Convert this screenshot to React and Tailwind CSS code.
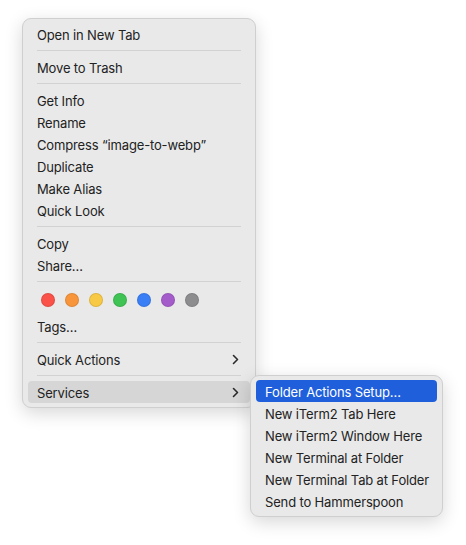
import React from "react";

// Finder-style context menu with the Services submenu open.
const TAGS = ["#fa5149", "#f8953a", "#f8c945", "#3fc352", "#3a7ef6", "#a55ccb", "#8d8d90"];

const SERVICES = [
  "Folder Actions Setup…",
  "New iTerm2 Tab Here",
  "New iTerm2 Window Here",
  "New Terminal at Folder",
  "New Terminal Tab at Folder",
  "Send to Hammerspoon",
];

function Chevron() {
  return (
    <svg width="7" height="11" viewBox="0 0 7 11" className="block">
      <polyline points="1.5,1.5 5.5,5.5 1.5,9.5" fill="none" stroke="#2a2a2a" strokeWidth="1.6" strokeLinecap="round" strokeLinejoin="round" />
    </svg>
  );
}

function Item({ label, sub, active }) {
  return (
    <div className={`flex h-[22px] items-center justify-between rounded-[4px] pl-[9px] pr-[11px] ${active ? "bg-[#d6d6d6]" : ""}`}>
      <span className="pt-[2px]">{label}</span>
      {sub && <Chevron />}
    </div>
  );
}

function Sep() {
  return (
    <div className="py-[5px] px-[9px]">
      <div className="h-px bg-[#d2d2d2]" />
    </div>
  );
}

export default function App() {
  return (
    <div className="relative h-[545px] w-[466px] bg-white text-[13px] leading-none tracking-[-0.15px] text-[#222]" style={{ fontFamily: "Inter, 'Noto Sans', sans-serif" }}>
      <div className="absolute left-[22px] top-[18px] w-[234px] rounded-[9px] border border-[#cfcfcf] bg-[#e9e9e9] px-[5px] py-[4px] shadow-[0_5px_18px_rgba(0,0,0,0.16)]">
        <Item label="Open in New Tab" />
        <Sep />
        <Item label="Move to Trash" />
        <Sep />
        <Item label="Get Info" />
        <Item label="Rename" />
        <Item label="Compress “image-to-webp”" />
        <Item label="Duplicate" />
        <Item label="Make Alias" />
        <Item label="Quick Look" />
        <Sep />
        <Item label="Copy" />
        <Item label="Share…" />
        <Sep />
        <div className="flex h-[28px] items-start gap-[10px] pl-[13px] pt-[6px]">
          {TAGS.map((c) => (
            <span key={c} className="block h-[14px] w-[14px] rounded-full border border-black/10" style={{ background: c }} />
          ))}
        </div>
        <Item label="Tags…" />
        <Sep />
        <Item label="Quick Actions" sub />
        <Sep />
        <Item label="Services" sub active />
      </div>

      <div className="absolute left-[250px] top-[375px] w-[193px] rounded-[9px] border border-[#cfcfcf] bg-[#e9e9e9] px-[5px] py-[4px] shadow-[0_5px_18px_rgba(0,0,0,0.16)]">
        {SERVICES.map((s, i) => (
          <div key={s} className={`flex h-[22px] items-center rounded-[4px] pl-[9px] ${i === 0 ? "bg-[#1f5fdc] text-white" : ""}`}>
            <span className="pt-[2px]">{s}</span>
          </div>
        ))}
      </div>
    </div>
  );
}
